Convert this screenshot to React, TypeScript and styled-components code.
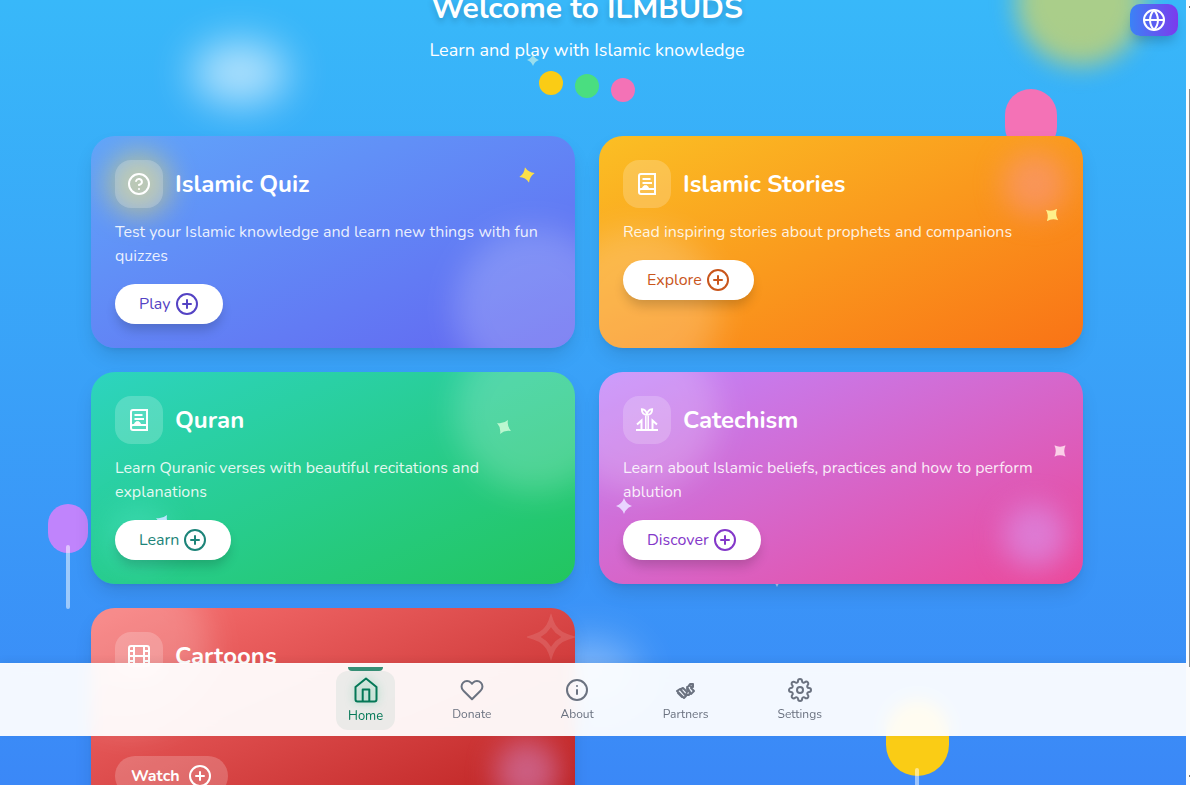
import React from 'react';
import styled, { createGlobalStyle, css } from 'styled-components';
import { FiFilm, FiGlobe, FiHeart, FiHelpCircle, FiInfo, FiPlusCircle, FiSettings } from 'react-icons/fi';

const GlobalStyle = createGlobalStyle`
  *, *::before, *::after { box-sizing: border-box; }
  body {
    margin: 0;
    font-family: Nunito, Lato, "Open Sans", sans-serif;
    color: #fff;
  }
  h1, h2, p { margin: 0; }
  button { border: 0; font: inherit; cursor: pointer; }
`;

const Viewport = styled.div`
  display: flex;
  height: 100vh;
  overflow: hidden;
`;

const Page = styled.div`
  position: relative;
  flex: 1;
  min-width: 0;
  overflow: hidden;
  padding-right: 12px;
  background: linear-gradient(to bottom, #38b8f9, #3b88f7);
`;

const ScrollTrack = styled.div`
  position: relative;
  width: 4px;
  background: #fcfcfc;
  &::before, &::after {
    content: '';
    position: absolute;
    right: 0;
    width: 1px;
    height: 2px;
    background: #777;
  }
  &::before { top: 6px; }
  &::after { bottom: 8px; }
`;

const ScrollThumb = styled.div`
  width: 1px;
  height: 578px;
  margin: 89px 0 0 3px;
  background: #8b8b8b;
`;

type GlowProps = { $x: string; $y: number; $w: number; $h: number; $color: string; $blur: number };
const SkyGlow = styled.div<GlowProps>`
  position: absolute;
  left: ${(p) => p.$x};
  top: ${(p) => p.$y}px;
  width: ${(p) => p.$w}px;
  height: ${(p) => p.$h}px;
  border-radius: 50%;
  background: ${(p) => p.$color};
  filter: blur(${(p) => p.$blur}px);
`;

type BalloonProps = { $x: string; $y: number; $w: number; $h: number; $color: string; $string: number };
const Balloon = styled.div<BalloonProps>`
  position: absolute;
  left: ${(p) => p.$x};
  top: ${(p) => p.$y}px;
  width: ${(p) => p.$w}px;
  height: ${(p) => p.$h}px;
  border-radius: 999px;
  background: ${(p) => p.$color};
  &::after {
    content: '';
    position: absolute;
    left: calc(50% - 2px);
    top: calc(100% - 8px);
    width: 4px;
    height: ${(p) => p.$string}px;
    border-radius: 2px;
    background: rgba(255, 255, 255, 0.5);
  }
`;

const Content = styled.main`
  position: relative;
  max-width: 1024px;
  margin: 0 auto;
  padding: 0 16px;
`;

const Header = styled.header`
  display: flex;
  flex-direction: column;
  align-items: center;
  height: 136px;
`;

const Title = styled.h1`
  font-size: 30px;
  font-weight: 700;
  line-height: 18px;
  text-shadow: 0 4px 6px rgba(0, 0, 0, 0.16);
`;

const Subtitle = styled.p`
  margin-top: 18px;
  font-size: 18px;
  line-height: 28px;
`;

const Dots = styled.div`
  display: flex;
  gap: 12px;
  margin-top: 7px;
`;

const Dot = styled.span<{ $color: string; $drop: number }>`
  width: 24px;
  height: 24px;
  margin-top: ${(p) => p.$drop}px;
  border-radius: 50%;
  background: ${(p) => p.$color};
`;

const Grid = styled.div`
  display: grid;
  grid-template-columns: repeat(2, minmax(0, 1fr));
  gap: 24px;
`;

const CardBox = styled.section<{ $from: string; $to: string }>`
  position: relative;
  overflow: hidden;
  padding: 24px;
  border-radius: 24px;
  background: linear-gradient(to bottom right, ${(p) => p.$from}, ${(p) => p.$to});
`;

const CardShadow = styled.div`
  display: grid;
  border-radius: 24px;
  box-shadow: 0 10px 20px -3px rgba(0, 0, 0, 0.12), 0 4px 6px -4px rgba(0, 0, 0, 0.1);
`;

type Corner = 'tl' | 'tr' | 'bl' | 'br';
const corner = (c: Corner, inset: number) => css`
  ${c[0] === 't' ? 'top' : 'bottom'}: ${inset}px;
  ${c[1] === 'l' ? 'left' : 'right'}: ${inset}px;
`;

const BigBubble = styled.div<{ $corner: Corner }>`
  position: absolute;
  ${(p) => corner(p.$corner, -40)}
  width: 160px;
  height: 160px;
  border-radius: 50%;
  background: rgba(255, 255, 255, 0.2);
  filter: blur(16px);
`;

const SmallBubble = styled.div<{ $corner: Corner; $color: string }>`
  position: absolute;
  ${(p) => corner(p.$corner, 16)}
  width: 64px;
  height: 64px;
  border-radius: 50%;
  background: ${(p) => p.$color};
  filter: blur(14px);
`;

const CardHead = styled.div`
  position: relative;
  display: flex;
  align-items: center;
  gap: 12px;
`;

const IconTile = styled.span`
  display: grid;
  place-items: center;
  width: 48px;
  height: 48px;
  border-radius: 16px;
  background: rgba(255, 255, 255, 0.2);
`;

const CardTitle = styled.h2`
  font-size: 24px;
  font-weight: 700;
  line-height: 32px;
`;

const CardText = styled.p<{ $lines: number }>`
  position: relative;
  min-height: ${(p) => p.$lines * 24}px;
  margin-top: 12px;
  font-size: 16px;
  line-height: 24px;
  color: rgba(255, 255, 255, 0.88);
`;

const Pill = styled.button<{ $color: string; $ghost?: boolean }>`
  position: relative;
  display: flex;
  align-items: center;
  gap: ${(p) => (p.$ghost ? 8 : 4)}px;
  height: 40px;
  margin-top: 16px;
  padding: 0 ${(p) => (p.$ghost ? 16 : 24)}px;
  border-radius: 20px;
  color: ${(p) => p.$color};
  background: ${(p) => (p.$ghost ? 'rgba(255, 255, 255, 0.2)' : '#fff')};
  font-size: 16px;
  font-weight: ${(p) => (p.$ghost ? 700 : 400)};
  box-shadow: ${(p) => (p.$ghost ? 'none' : '0 8px 12px -2px rgba(0, 0, 0, 0.18)')};
`;

type StarProps = { $x: string; $y: string; $size: number; $turn: number; $color: string };
const StarSvg = styled.svg<StarProps>`
  position: absolute;
  left: ${(p) => p.$x};
  top: ${(p) => p.$y};
  width: ${(p) => p.$size}px;
  height: ${(p) => p.$size}px;
  color: ${(p) => p.$color};
  transform: rotate(${(p) => p.$turn}deg);
`;

const LanguageButton = styled.button`
  position: absolute;
  top: 4px;
  right: 8px;
  display: grid;
  place-items: center;
  width: 48px;
  height: 32px;
  padding: 0;
  border-radius: 10px;
  color: #fff;
  background: linear-gradient(to right, #3b82f6, #7c3aed);
  box-shadow: 0 8px 12px -3px rgba(0, 0, 0, 0.2);
`;

const NavBar = styled.nav`
  position: absolute;
  left: 0;
  right: 0;
  bottom: 49px;
  display: flex;
  justify-content: center;
  align-items: center;
  gap: 45px;
  height: 73px;
  padding-right: 16px;
  border-top: 1px solid rgba(255, 255, 255, 0.3);
  background: rgba(255, 255, 255, 0.94);
  backdrop-filter: blur(8px);
  box-shadow: 0 -2px 8px rgba(0, 0, 0, 0.06);
`;

const NavLink = styled.a<{ $active?: boolean }>`
  position: relative;
  display: flex;
  flex-direction: column;
  align-items: center;
  gap: 4px;
  padding: 6px 12px;
  border-radius: 12px;
  color: #6b7280;
  font-size: 12px;
  line-height: 16px;
  text-decoration: none;
  ${(p) =>
    p.$active &&
    css`
      gap: 5px;
      color: #047857;
      font-size: 13px;
      background: rgba(4, 120, 87, 0.07);
      svg { filter: drop-shadow(0 0 4px rgba(16, 185, 129, 0.5)); }
      &::before {
        content: '';
        position: absolute;
        top: -4px;
        left: 12px;
        right: 12px;
        height: 4px;
        border-radius: 0 0 4px 4px;
        background: #368f75;
      }
    `}
`;

function Star(props: StarProps) {
  return (
    <StarSvg viewBox="0 0 24 24" fill="currentColor" aria-hidden="true" {...props}>
      <path d="M12 0 Q15 9 24 12 Q15 15 12 24 Q9 15 0 12 Q9 9 12 0Z" />
    </StarSvg>
  );
}

function HomeIcon() {
  return (
    <svg width="24" height="26" viewBox="0 0 24 26" fill="none" stroke="currentColor" strokeWidth="2" strokeLinejoin="round" aria-hidden="true">
      <path d="M1.500 10 12 1.500 22.500 10v12.500a2 2 0 0 1-2 2h-17a2 2 0 0 1-2-2z" />
      <path d="M8.700 24.500v-12h6.600v12" />
    </svg>
  );
}

function BookIcon() {
  return (
    <svg width="24" height="24" viewBox="0 0 24 24" fill="none" stroke="currentColor" strokeWidth="2" aria-hidden="true">
      <path d="M20 2H6a2 2 0 0 0-2 2v16a2 2 0 0 0 2 2h14z" />
      <path d="M4 19a2 2 0 0 1 2-2h14M7.500 7h8M7.500 11h9.500" />
      <path d="M7.500 15.500q1-2 3-2t3 2z" fill="currentColor" strokeWidth="1" />
    </svg>
  );
}

function SproutIcon() {
  return (
    <svg width="24" height="24" viewBox="0 0 24 24" fill="none" stroke="currentColor" strokeWidth="2" aria-hidden="true">
      <path d="M1 22h22" />
      <path d="M10.800 22V7.500M13.200 22V7.500" strokeWidth="1.500" />
      <path d="M12 6.800C11.500 3.500 10 1.500 6.800 1.200c0 3.500 1.700 5.600 5.200 5.600M12 6.800c.5-3.300 2-5.300 5.200-5.600 0 3.500-1.700 5.600-5.200 5.600" strokeWidth="1.800" />
      <path d="M6.500 22v-9.500L2 16.500M17.500 22v-9.500l4.500 4" />
    </svg>
  );
}

function HandshakeIcon() {
  return (
    <svg width="24" height="24" viewBox="0 0 24 24" fill="none" stroke="currentColor" strokeWidth="2" strokeLinejoin="round" strokeLinecap="round" aria-hidden="true">
      <path d="M3 13l3-2 6 7-2 2-7-7zM4 15l4 4M7 11l2-1 4 4-1 3 3 0 1-3-3-5M13 10l3-4 3 0v3l-3-1M17 10l3 3-3 3-4-5" />
    </svg>
  );
}

type CardData = {
  title: string;
  text: string;
  lines: number;
  action: string;
  icon: React.ReactNode;
  from: string;
  to: string;
  ink: string;
  big: Corner;
  small: Corner;
  glow: string;
  ghost?: boolean;
  stars: StarProps[];
};

const cards: CardData[] = [
  {
    title: 'Islamic Quiz', text: 'Test your Islamic knowledge and learn new things with fun quizzes', lines: 2,
    action: 'Play', icon: <FiHelpCircle size={24} />, from: '#60a5fa', to: '#6366f1', ink: '#5443c4',
    big: 'br', small: 'tl', glow: 'rgba(253, 224, 71, 0.5)',
    stars: [{ $x: '428px', $y: '31px', $size: 16, $turn: -15, $color: '#fde047' }],
  },
  {
    title: 'Islamic Stories', text: 'Read inspiring stories about prophets and companions', lines: 1,
    action: 'Explore', icon: <BookIcon />, from: '#fbbf24', to: '#f97316', ink: '#c9561c',
    big: 'bl', small: 'tr', glow: 'rgba(249, 150, 130, 0.6)',
    stars: [{ $x: '445px', $y: '71px', $size: 16, $turn: 40, $color: '#fef08a' }],
  },
  {
    title: 'Quran', text: 'Learn Quranic verses with beautiful recitations and explanations', lines: 2,
    action: 'Learn', icon: <BookIcon />, from: '#2dd4bf', to: '#22c55e', ink: '#1d8479',
    big: 'tr', small: 'bl', glow: 'rgba(94, 234, 212, 0.3)',
    stars: [
      { $x: '405px', $y: '47px', $size: 16, $turn: 30, $color: '#bbf7d0' },
      { $x: '64px', $y: '142px', $size: 16, $turn: 30, $color: '#bae6fd' },
    ],
  },
  {
    title: 'Catechism', text: 'Learn about Islamic beliefs, practices and how to perform ablution', lines: 2,
    action: 'Discover', icon: <SproutIcon />, from: '#c084fc', to: '#ec4899', ink: '#8438c9',
    big: 'tl', small: 'br', glow: 'rgba(216, 150, 240, 0.6)',
    stars: [
      { $x: '453px', $y: '71px', $size: 16, $turn: 45, $color: '#fbcfe8' },
      { $x: '17px', $y: '126px', $size: 16, $turn: 0, $color: '#e9d5ff' },
    ],
  },
  {
    title: 'Cartoons', text: '', lines: 2,
    action: 'Watch', icon: <FiFilm size={24} />, from: '#f87171', to: '#b91c1c', ink: '#fff',
    big: 'tl', small: 'br', glow: 'rgba(210, 130, 190, 0.6)', ghost: true, stars: [],
  },
];

function OutlineStar() {
  return (
    <StarSvg viewBox="0 0 24 24" fill="none" stroke="currentColor" strokeWidth="2.500" aria-hidden="true"
      $x="calc(100% - 48px)" $y="5px" $size={48} $turn={0} $color="rgba(255, 255, 255, 0.12)">
      <path d="M12 4 Q14 10 20.500 12 Q14 14 12 20 Q10 14 3.500 12 Q10 10 12 4Z" />
    </StarSvg>
  );
}

function Card({ data }: { data: CardData }) {
  return (
    <CardShadow>
      <CardBox $from={data.from} $to={data.to}>
        <BigBubble $corner={data.big} />
        <SmallBubble $corner={data.small} $color={data.glow} />
        {data.stars.map((s, i) => <Star key={i} {...s} />)}
        {data.ghost && <OutlineStar />}
        <CardHead>
          <IconTile>{data.icon}</IconTile>
          <CardTitle>{data.title}</CardTitle>
        </CardHead>
        <CardText $lines={data.lines}>{data.text}</CardText>
        <Pill type="button" $color={data.ink} $ghost={data.ghost}>
          {data.action}
          <FiPlusCircle size={24} />
        </Pill>
      </CardBox>
    </CardShadow>
  );
}

export default function App() {
  return (
    <Viewport>
      <GlobalStyle />
      <Page>
        <SkyGlow $x="calc(20% - 45px)" $y={41} $w={96} $h={64} $color="rgba(255, 255, 255, 0.6)" $blur={20} />
        <SkyGlow $x="calc(92% - 75px)" $y={-62} $w={128} $h={128} $color="rgba(240, 220, 70, 0.62)" $blur={12} />
        <SkyGlow $x="calc(50% - 51px)" $y={640} $w={96} $h={64} $color="rgba(255, 255, 255, 0.35)" $blur={20} />
        <Balloon $x="calc(85% - 3px)" $y={89} $w={52} $h={64} $color="#f472b6" $string={64} />
        <Balloon $x="calc(4% + 1px)" $y={504} $w={40} $h={49} $color="#c084fc" $string={64} />
        <Balloon $x="calc(75% - 4px)" $y={700} $w={63} $h={76} $color="#facc15" $string={80} />
        <Star $x="calc(65% + 0px)" $y="575px" $size={12} $turn={0} $color="rgba(255, 255, 255, 0.6)" />
        <Content>
          <Header>
            <Title>Welcome to ILMBUDS</Title>
            <Subtitle>Learn and play with Islamic knowledge</Subtitle>
            <Dots>
              <Dot $color="#facc15" $drop={0} />
              <Dot $color="#4ade80" $drop={3} />
              <Dot $color="#f472b6" $drop={7} />
            </Dots>
          </Header>
          <Grid>
            {cards.map((c) => <Card key={c.title} data={c} />)}
          </Grid>
        </Content>
        <Star $x="calc(45% - 7px)" $y="54px" $size={12} $turn={0} $color="rgba(220, 250, 230, 0.6)" />
        <LanguageButton type="button" aria-label="Change language">
          <FiGlobe size={24} />
        </LanguageButton>
        <NavBar>
          <NavLink href="#home" $active><HomeIcon />Home</NavLink>
          <NavLink href="#donate"><FiHeart size={24} />Donate</NavLink>
          <NavLink href="#about"><FiInfo size={24} />About</NavLink>
          <NavLink href="#partners"><HandshakeIcon />Partners</NavLink>
          <NavLink href="#settings"><FiSettings size={24} />Settings</NavLink>
        </NavBar>
      </Page>
      <ScrollTrack><ScrollThumb /></ScrollTrack>
    </Viewport>
  );
}
